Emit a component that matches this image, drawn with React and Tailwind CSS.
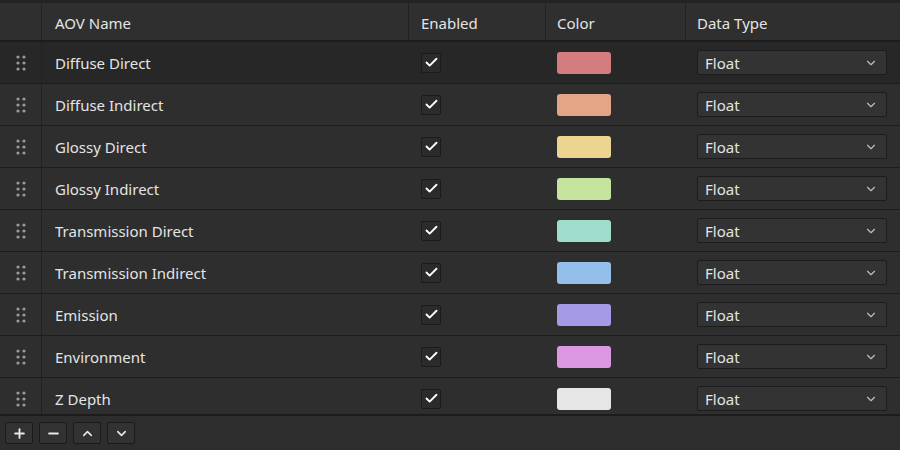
import { Check, ChevronDown, ChevronUp, Plus, Minus } from "lucide-react";

const aovs = [
  { name: "Diffuse Direct", color: "#d47c80" },
  { name: "Diffuse Indirect", color: "#e3a586" },
  { name: "Glossy Direct", color: "#ecd591" },
  { name: "Glossy Indirect", color: "#c4e49d" },
  { name: "Transmission Direct", color: "#9fdccb" },
  { name: "Transmission Indirect", color: "#93bfea" },
  { name: "Emission", color: "#a59ae6" },
  { name: "Environment", color: "#dc97e3" },
  { name: "Z Depth", color: "#e6e6e6" },
];

const cols = "grid grid-cols-[42px_367px_137px_140px_1fr]";

function DragHandle() {
  return (
    <svg width="10" height="16" viewBox="0 0 10 16" className="fill-[#9a9a9a]">
      {[2, 8, 14].map((y) => (
        <g key={y}>
          <circle cx="2" cy={y} r="1.6" />
          <circle cx="8" cy={y} r="1.6" />
        </g>
      ))}
    </svg>
  );
}

function Row({ aov, active }) {
  return (
    <div className={`${cols} h-[42px] border-b border-[#1d1d1d] ${active ? "bg-[#272727]" : "bg-[#2e2e2e]"}`}>
      <div className="flex items-center justify-center border-r border-[#222]">
        <DragHandle />
      </div>
      <div className="flex items-center pl-[13px] pt-[2px]">{aov.name}</div>
      <div className="flex items-center pl-[12px]">
        <span className="flex h-[20px] w-[20px] items-center justify-center rounded-[2px] border border-[#1b1b1b] bg-[#2b2b2b]">
          <Check size={15} strokeWidth={3} className="text-white" />
        </span>
      </div>
      <div className="flex items-center pl-[11px]">
        <span className="h-[22px] w-[54px] rounded-[3px]" style={{ backgroundColor: aov.color }} />
      </div>
      <div className="flex items-center pl-[11px] pr-[13px]">
        <div className="flex h-[25px] flex-1 items-center justify-between rounded-[2px] border border-[#1c1c1c] bg-[#333333] pl-[7px] pr-[8px]">
          <span className="pt-[2px]">Float</span>
          <ChevronDown size={14} strokeWidth={2} className="text-[#bdbdbd]" />
        </div>
      </div>
    </div>
  );
}

function ToolButton({ children }) {
  return (
    <button className="flex h-[22px] w-[28px] items-center justify-center rounded-[2px] border border-[#1a1a1a] bg-[#323232] text-[#e8e8e8]">
      {children}
    </button>
  );
}

export default function App() {
  return (
    <div className="flex h-[450px] w-[900px] flex-col overflow-hidden border-t-[3px] border-[#232323] bg-[#2d2d2d] text-[15px] text-[#e4e4e4] font-['Noto_Sans',sans-serif]">
      <div className={`${cols} h-[39px] shrink-0 border-b-2 border-[#1c1c1c] bg-[#2f2f2f]`}>
        <div className="border-r border-[#222]" />
        <div className="flex items-center border-r border-[#222] pl-[13px] pt-[3px]">AOV Name</div>
        <div className="flex items-center border-r border-[#222] pl-[12px] pt-[3px]">Enabled</div>
        <div className="flex items-center border-r border-[#222] pl-[11px] pt-[3px]">Color</div>
        <div className="flex items-center pl-[11px] pt-[3px]">Data Type</div>
      </div>
      <div className="h-[374px] shrink-0 overflow-hidden border-b-2 border-[#1c1c1c]">
        {aovs.map((aov, i) => (
          <Row key={aov.name} aov={aov} active={i === 0} />
        ))}
      </div>
      <div className="flex flex-1 items-center gap-[6px] px-[5px]">
        <ToolButton><Plus size={15} strokeWidth={3} /></ToolButton>
        <ToolButton><Minus size={15} strokeWidth={3} /></ToolButton>
        <ToolButton><ChevronUp size={15} strokeWidth={2.5} /></ToolButton>
        <ToolButton><ChevronDown size={15} strokeWidth={2.5} /></ToolButton>
      </div>
    </div>
  );
}
